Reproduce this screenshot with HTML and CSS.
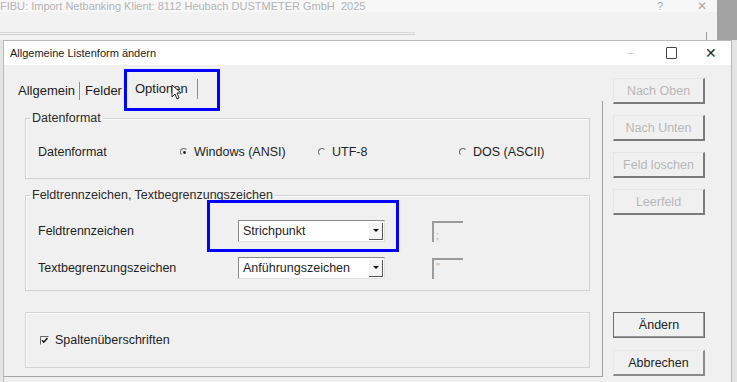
FILE: index.html
```html
<!DOCTYPE html>
<html lang="de">
<head>
    <meta charset="UTF-8">
    <meta name="viewport" content="width=device-width, initial-scale=1.0">
    <title>Allgemeine Listenform ändern</title>
    <link rel="stylesheet" href="styles.css">
</head>
<body>
    <div class="backdrop">
        <div class="bg-window">
            <div class="bg-title">
                <span class="bg-caption">FIBU: Import Netbanking Klient: 8112 Heubach DUSTMETER GmbH &nbsp;2025</span>
                <span class="bg-help">?</span>
                <span class="bg-close">✕</span>
            </div>
            <div class="bg-strip">
                <div class="bg-tabline"></div>
                <div class="bg-tick"></div>
            </div>
        </div>
        <div class="bg-scroll"></div>
    </div>

    <div class="dialog">
        <div class="titlebar">
            <span class="caption">Allgemeine Listenform ändern</span>
            <span class="ctl ctl-min">–</span>
            <span class="ctl ctl-max"></span>
            <span class="ctl ctl-close">✕</span>
        </div>

        <div class="dialog-body">
            <div class="tab-area">
                <div class="tabs">
                    <div class="tab">Allgemein</div>
                    <div class="tab tab-plain">Felder</div>
                    <div class="tab tab-active">
                        Optionen
                        <svg class="cursor" width="11" height="16" viewBox="0 0 11 16">
                            <path d="M1 1 L1 13 L4 10 L6 15 L8 14 L6 9 L10 9 Z" fill="#fff" stroke="#222" stroke-width="1"/>
                        </svg>
                    </div>
                </div>

                <div class="panel">
                    <fieldset class="group">
                        <legend>Datenformat</legend>
                        <div class="format-row">
                            <span class="label">Datenformat</span>
                            <span class="radio">
                                <svg width="9" height="9" viewBox="0 0 9 9">
                                    <path d="M1.5 6.5 A3.5 3.5 0 0 1 6.5 1.5" fill="none" stroke="#777" stroke-width="1.2"/>
                                    <circle cx="4.5" cy="4.5" r="1.4" fill="#222"/>
                                </svg>
                                Windows (ANSI)
                            </span>
                            <span class="radio">
                                <svg width="9" height="9" viewBox="0 0 9 9">
                                    <path d="M1.5 6.5 A3.5 3.5 0 0 1 6.5 1.5" fill="none" stroke="#777" stroke-width="1.2"/>
                                </svg>
                                UTF-8
                            </span>
                            <span class="radio">
                                <svg width="9" height="9" viewBox="0 0 9 9">
                                    <path d="M1.5 6.5 A3.5 3.5 0 0 1 6.5 1.5" fill="none" stroke="#777" stroke-width="1.2"/>
                                </svg>
                                DOS (ASCII)
                            </span>
                        </div>
                    </fieldset>

                    <fieldset class="group group-sep">
                        <legend>Feldtrennzeichen, Textbegrenzungszeichen</legend>
                        <div class="sep-row">
                            <span class="label">Feldtrennzeichen</span>
                            <div class="combo">
                                <span>Strichpunkt</span>
                                <span class="combo-btn"></span>
                            </div>
                            <div class="char-box">;</div>
                        </div>
                        <div class="sep-row">
                            <span class="label">Textbegrenzungszeichen</span>
                            <div class="combo">
                                <span>Anführungszeichen</span>
                                <span class="combo-btn"></span>
                            </div>
                            <div class="char-box char-top">"</div>
                        </div>
                    </fieldset>

                    <div class="group group-plain">
                        <label class="check">
                            <svg width="9" height="9" viewBox="0 0 9 9">
                                <path d="M0.5 8.5 V0.5 H8.5" fill="none" stroke="#666" stroke-width="1"/>
                                <path d="M2 4.2 L3.8 6.3 L7.5 2" fill="none" stroke="#111" stroke-width="1.4"/>
                            </svg>
                            Spaltenüberschriften
                        </label>
                    </div>
                </div>
            </div>

            <div class="side">
                <button class="btn btn-off">Nach Oben</button>
                <button class="btn btn-off">Nach Unten</button>
                <button class="btn btn-off">Feld loschen</button>
                <button class="btn btn-off">Leerfeld</button>
                <button class="btn btn-default">Ändern</button>
                <button class="btn btn-cancel">Abbrechen</button>
            </div>
        </div>
    </div>

    <div class="mark mark-tab"></div>
    <div class="mark mark-combo"></div>
</body>
</html>
```

FILE: styles.css
```css
* {
    margin: 0;
    padding: 0;
    box-sizing: border-box;
}

body {
    width: 737px;
    height: 382px;
    overflow: hidden;
    position: relative;
    background: #e4e4e4;
    font-family: "Liberation Sans", Arial, sans-serif;
    color: #1e1e1e;
}

/* window behind the dialog */
.backdrop {
    display: flex;
    height: 40px;
}

.bg-window {
    flex: 1;
    display: flex;
    flex-direction: column;
    background: #f2f2f2;
}

.bg-title {
    display: flex;
    align-items: center;
    height: 12px;
    font-size: 11px;
    color: #b4b4b4;
    background: #f7f7f7;
}

.bg-caption {
    flex: 1;
    white-space: nowrap;
    margin-top: -1px;
}

.bg-help {
    width: 40px;
    color: #a8a8a8;
}

.bg-close {
    width: 20px;
    color: #a8a8a8;
    font-size: 12px;
}

.bg-strip {
    flex: 1;
    display: flex;
    align-items: flex-end;
    padding-bottom: 5px;
}

.bg-tabline {
    width: 415px;
    height: 3px;
    border-top: 1px solid #d8d8d8;
    border-bottom: 1px solid #cfcfcf;
}

.bg-tick {
    margin-left: auto;
    margin-right: 10px;
    width: 1px;
    height: 8px;
    margin-bottom: -5px;
    background: #9a9a9a;
}

.bg-scroll {
    width: 20px;
    background: #a3a3a3;
}

/* dialog */
.dialog {
    margin-left: 3px;
    width: 729px;
    height: 343px;
    border: 1px solid #b9b9b9;
    background: #f0f0f0;
    display: flex;
    flex-direction: column;
}

.titlebar {
    height: 24px;
    background: #ffffff;
    display: flex;
    align-items: center;
    padding-left: 6px;
    font-size: 11px;
}

.caption {
    flex: 1;
    color: #1a1a1a;
}

.ctl {
    display: flex;
    align-items: center;
    justify-content: center;
    width: 41px;
    color: #2a2a2a;
}

.ctl-min {
    color: #d0d0d0;
    font-size: 12px;
}

.ctl-max::before {
    content: '';
    width: 9px;
    height: 10px;
    border: 1.5px solid #444;
    border-radius: 1px;
}

.ctl-close {
    font-size: 14px;
    width: 38px;
    margin-right: 1px;
}

.dialog-body {
    flex: 1;
    display: flex;
}

.tab-area {
    width: 599px;
    padding-top: 15px;
    display: flex;
    flex-direction: column;
}

.tabs {
    display: flex;
    align-items: center;
    height: 21px;
    padding-left: 14px;
    font-size: 13px;
}

.tab {
    position: relative;
    padding: 0 4px 0 0;
    margin-right: 5px;
    line-height: 18px;
    border-right: 1px solid #8c8c8c;
    white-space: nowrap;
    color: #1a1a1a;
}

.tab-plain {
    border-right: none;
    margin-right: 0;
    padding-right: 1px;
}

.tab-active {
    padding: 0 9px 0 11px;
    margin-top: -4px;
    line-height: 20px;
    border-left: 1px solid #e6e6e6;
    border-right-color: #8c8c8c;
}

.cursor {
    position: absolute;
    left: 47px;
    top: 5px;
}

.panel {
    flex: 1;
    padding: 10px 12px 8px 21px;
    border-right: 1px solid #9d9d9d;
    border-bottom: 1px solid #a5a5a5;
    margin-bottom: 5px;
}

.group {
    border: 1px solid #d3d3d3;
    box-shadow: inset 1px 1px 0 #fbfbfb;
    padding: 17px 12px 16px 12px;
    font-size: 12.5px;
}

.group legend {
    padding: 0 2px;
    margin-left: -8px;
    line-height: 14px;
    color: #2a2a2a;
}

.format-row {
    display: grid;
    grid-template-columns: 142px 138px 141px auto;
    align-items: center;
    height: 20px;
}

.radio {
    display: flex;
    align-items: center;
    gap: 5px;
}

.group-sep {
    margin-top: 9px;
    padding-top: 18px;
    padding-bottom: 11px;
    display: flex;
    flex-direction: column;
    gap: 15px;
}

.sep-row {
    display: flex;
    align-items: center;
    height: 22px;
}

.sep-row .label {
    width: 200px;
}

.combo {
    width: 147px;
    height: 22px;
    display: flex;
    align-items: center;
    justify-content: space-between;
    background: #ffffff;
    border-top: 1px solid #8a8a8a;
    border-left: 1px solid #8a8a8a;
    border-right: 1px solid #e2e2e2;
    border-bottom: 1px solid #e2e2e2;
    padding: 1px 1px 1px 4px;
}

.combo-btn {
    width: 14px;
    height: 17px;
    display: flex;
    align-items: center;
    justify-content: center;
    background: #f4f4f4;
    border-right: 1px solid #555;
    border-bottom: 1px solid #555;
}

.combo-btn::before {
    content: '';
    border-left: 3px solid transparent;
    border-right: 3px solid transparent;
    border-top: 3px solid #111;
}

.char-box {
    margin-left: 47px;
    width: 31px;
    height: 21px;
    border-top: 2px solid #9b9b9b;
    border-left: 2px solid #9b9b9b;
    font-size: 11px;
    color: #b0b0b0;
    padding: 6px 0 0 2px;
}

.char-top {
    padding-top: 1px;
}

.group-plain {
    margin-top: 21px;
    padding: 19px 12px 19px 14px;
}

.check {
    display: flex;
    align-items: center;
    gap: 6px;
    height: 16px;
}

/* right button column */
.side {
    width: 92px;
    margin-left: 10px;
    padding: 13px 0 6px;
    display: flex;
    flex-direction: column;
    gap: 11px;
}

.btn {
    height: 26px;
    font-family: "Liberation Sans", Arial, sans-serif;
    font-size: 12.5px;
    background: #f0f0f0;
    color: #1e1e1e;
}

.btn-off {
    color: #b8b8b8;
    border-top: 1px solid #e6e6e6;
    border-left: 1px solid #e6e6e6;
    border-right: 2px solid #7b7b7b;
    border-bottom: 2px solid #7b7b7b;
}

.btn-default {
    margin-top: auto;
    border: 1px solid #6f6f6f;
    box-shadow: inset -1px -1px 0 #9a9a9a;
}

.btn-cancel {
    margin-top: 1px;
    border-top: 1px solid #e8e8e8;
    border-left: 1px solid #e8e8e8;
    border-right: 2px solid #8a8a8a;
    border-bottom: 2px solid #8a8a8a;
}

/* blue annotation frames */
.mark {
    position: absolute;
    border: 3px solid #0000ff;
}

.mark-tab {
    left: 124px;
    top: 69px;
    width: 96px;
    height: 42px;
}

.mark-combo {
    left: 207px;
    top: 200px;
    width: 192px;
    height: 52px;
}
```
